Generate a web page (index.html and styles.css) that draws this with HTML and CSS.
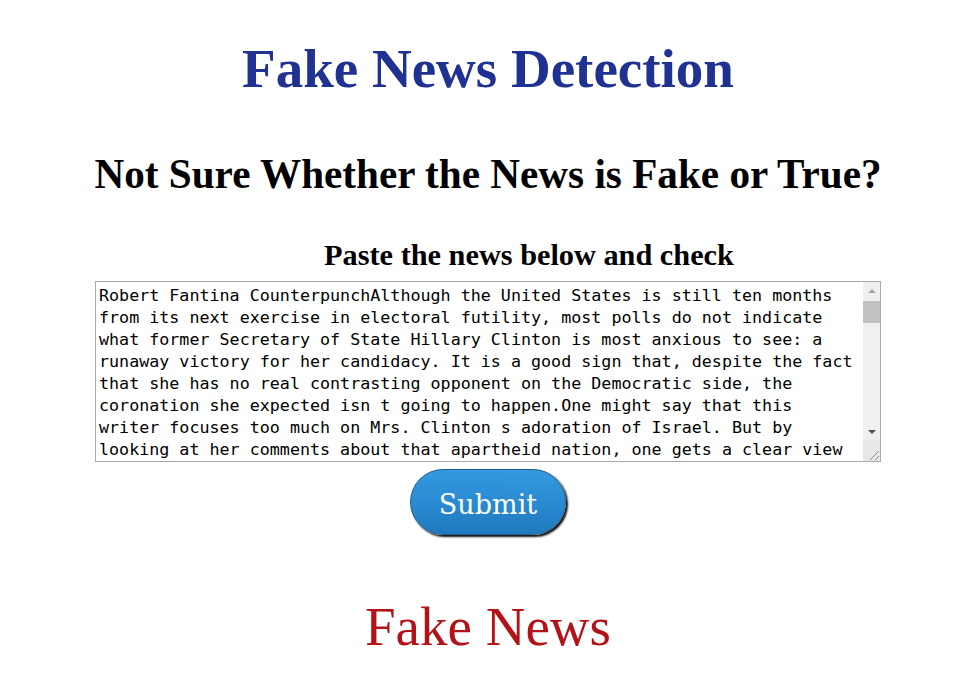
FILE: index.html
```html
<!DOCTYPE html>
<html lang="en">
<head>
<meta charset="utf-8">
<title>Fake News Detection</title>
<link rel="stylesheet" href="styles.css">
</head>
<body>
<main class="page">
  <h1 class="title">Fake News Detection</h1>
  <h2 class="question">Not Sure Whether the News is Fake or True?</h2>
  <form class="check-form">
    <label class="prompt" for="news">Paste the news below and check</label>
    <div class="editor">
      <textarea id="news" class="news-input" name="news">Robert Fantina CounterpunchAlthough the United States is still ten months from its next exercise in electoral futility, most polls do not indicate what former Secretary of State Hillary Clinton is most anxious to see: a runaway victory for her candidacy. It is a good sign that, despite the fact that she has no real contrasting opponent on the Democratic side, the coronation she expected isn t going to happen.One might say that this writer focuses too much on Mrs. Clinton s adoration of Israel. But by looking at her comments about that apartheid nation, one gets a clear view of how she regards human rights, international law and the plight of oppressed people around the world. Her statements leave little room for doubt about the kind of foreign policy she would pursue if she were elected to the presidency next November.</textarea>
      <div class="scrollbar" aria-hidden="true">
        <div class="sb-btn">
          <svg width="8" height="4" viewBox="0 0 8 4"><polygon points="4,0 8,4 0,4" fill="#a3a3a3"/></svg>
        </div>
        <div class="sb-track"><div class="sb-thumb"></div></div>
        <div class="sb-btn">
          <svg width="8" height="4" viewBox="0 0 8 4"><polygon points="0,0 8,0 4,4" fill="#505050"/></svg>
        </div>
        <div class="sb-corner">
          <svg width="12" height="12" viewBox="0 0 12 12"><line x1="11" y1="2" x2="2" y2="11" stroke="#8a8a8a" stroke-width="1"/><line x1="11" y1="7" x2="7" y2="11" stroke="#8a8a8a" stroke-width="1"/></svg>
        </div>
      </div>
    </div>
    <button type="button" class="submit-btn">Submit</button>
  </form>
  <h1 class="result">Fake News</h1>
</main>
</body>
</html>
```

FILE: styles.css
```css
html, body {
  background: #ffffff;
}

body {
  margin: 0;
  padding: 0 0 0 14px;
  font-family: "Liberation Serif", "Times New Roman", serif;
  color: #000000;
}

.page {
  display: flex;
  flex-direction: column;
  align-items: center;
}

.title {
  margin: 38px 0 0;
  font-size: 55px;
  line-height: 62px;
  font-weight: bold;
  color: #1f3191;
}

.question {
  margin: 50px 0 0;
  font-size: 41.2px;
  line-height: 48px;
  font-weight: bold;
  color: #000000;
}

.check-form {
  display: flex;
  flex-direction: column;
  align-items: center;
  margin-top: 39px;
}

.prompt {
  display: block;
  margin: 0 0 8px 82px;
  font-size: 30.3px;
  line-height: 36px;
  font-weight: bold;
  color: #000000;
}

.editor {
  position: relative;
  width: 786px;
  height: 181px;
}

.news-input {
  display: block;
  box-sizing: border-box;
  width: 786px;
  height: 181px;
  margin: 0;
  padding: 2px 26px 2px 3px;
  border: 1px solid #a9a9a9;
  border-radius: 0;
  font-family: "DejaVu Sans Mono", "Liberation Mono", monospace;
  font-size: 16.7px;
  line-height: 22px;
  color: #000000;
  background: #ffffff;
  resize: both;
  overflow-y: scroll;
}

.scrollbar {
  position: absolute;
  top: 1px;
  right: 1px;
  bottom: 1px;
  width: 17px;
  display: flex;
  flex-direction: column;
  background: #f0f0f0;
  pointer-events: none;
}

.sb-btn {
  height: 17px;
  flex: 0 0 17px;
  display: flex;
  align-items: center;
  justify-content: center;
}

.sb-btn svg {
  display: block;
}

.sb-track {
  flex: 1 1 auto;
  padding-top: 2px;
}

.sb-thumb {
  height: 22px;
  background: #c1c1c1;
}

.sb-corner {
  flex: 0 0 21px;
  height: 21px;
  display: flex;
  align-items: flex-end;
  justify-content: flex-end;
  background: #e8e8e8;
}

.sb-corner svg {
  display: block;
}

.submit-btn {
  box-sizing: border-box;
  width: 156px;
  height: 66px;
  margin-top: 7px;
  padding: 5px 0 0;
  border: 1px solid #1d5f93;
  border-radius: 33px;
  background: linear-gradient(to bottom, #3399df 0%, #2b8bd2 50%, #1f78bc 100%);
  box-shadow: 2px 2px 2px #111111;
  font-family: "DejaVu Serif", Georgia, serif;
  font-size: 27px;
  color: #ffffff;
  cursor: pointer;
}

.result {
  margin: 61px 0 0;
  font-size: 55px;
  line-height: 62px;
  font-weight: normal;
  color: #b31217;
}
```
